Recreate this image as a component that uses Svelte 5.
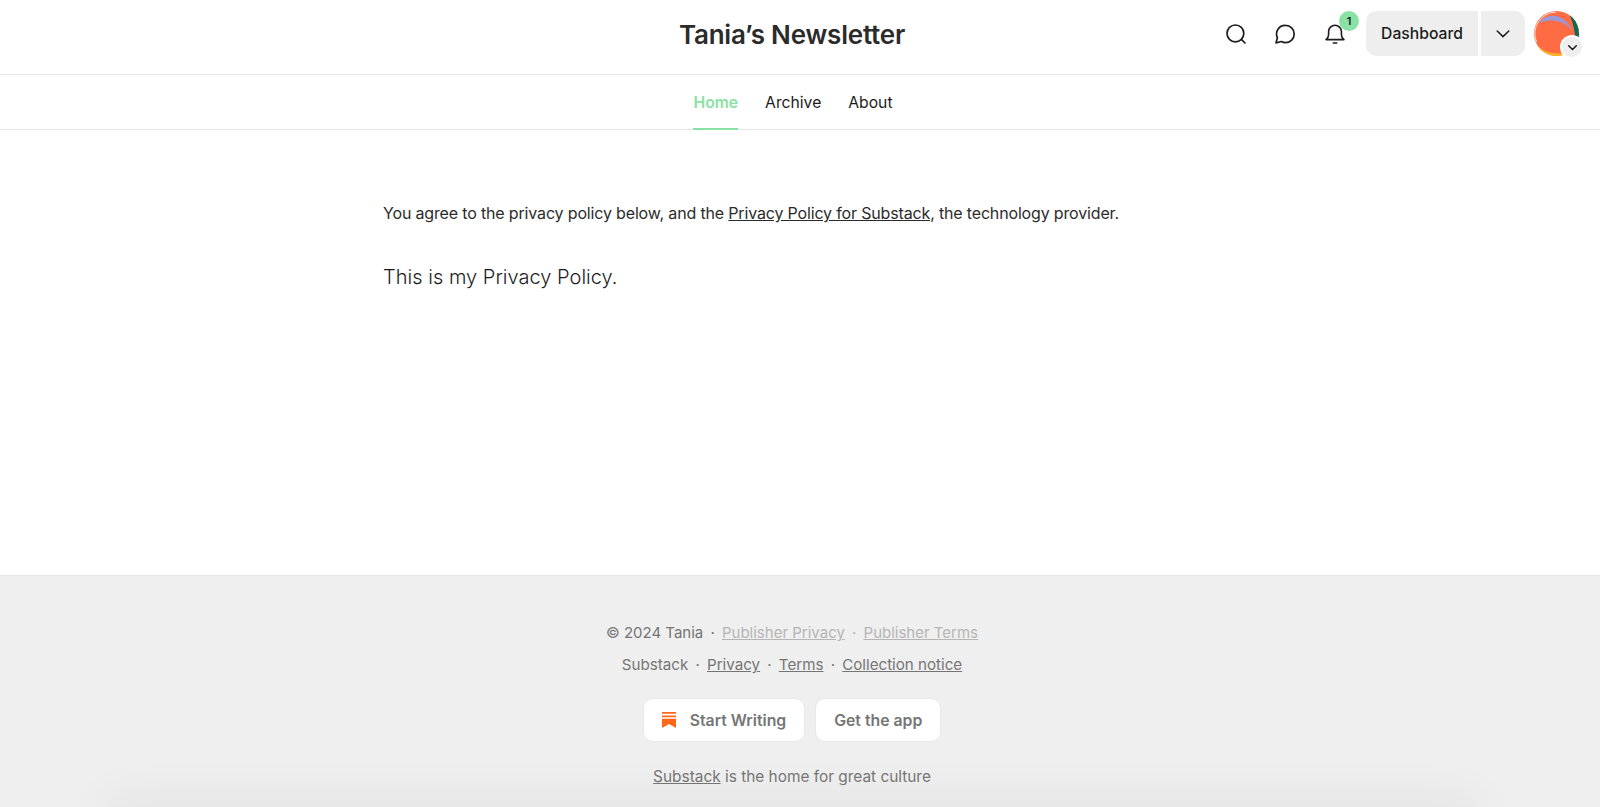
<script lang="ts">
	const tabs = [
		{ label: 'Home', active: true },
		{ label: 'Archive', active: false },
		{ label: 'About', active: false }
	];
</script>

<div class="page">
	<header class="topbar">
		<div class="title">Tania’s Newsletter</div>
		<div class="actions">
			<button class="icon-btn search" aria-label="Search">
				<svg width="24" height="24" viewBox="0 0 24 24" fill="none" stroke="#1c1c1c" stroke-width="1.7" stroke-linecap="round">
					<circle cx="11.4" cy="11.4" r="8.4" />
					<path d="M17.6 17.6l3.4 3.4" />
				</svg>
			</button>
			<button class="icon-btn chat" aria-label="Chat">
				<svg width="24" height="24" viewBox="0 0 24 24" fill="none" stroke="#1c1c1c" stroke-width="1.7" stroke-linejoin="round">
					<path d="M12.6 3.4a8.6 8.6 0 0 1 0 17.2c-1.5 0-3-.4-4.2-1.1L3 20.9l1.4-5.2a8.6 8.6 0 0 1 8.2-12.3z" />
				</svg>
			</button>
			<div class="bell-wrap">
				<svg width="24" height="24" viewBox="0 0 24 24" fill="none" stroke="#1c1c1c" stroke-width="1.6" stroke-linecap="round" stroke-linejoin="round">
					<path d="M3 17.6c1.6-1.2 2.6-2.6 2.6-5.2V9.6a6.4 6.4 0 0 1 12.8 0v2.8c0 2.6 1 4 2.6 5.2z" />
					<path d="M10.3 21h3.4" />
				</svg>
				<span class="badge">1</span>
			</div>
			<div class="split">
				<button class="dash">Dashboard</button>
				<button class="caret" aria-label="More">
					<svg width="16" height="16" viewBox="0 0 16 16" fill="none" stroke="#1c1c1c" stroke-width="1.5" stroke-linecap="round" stroke-linejoin="round">
						<path d="M2.2 5l5.8 5.6L13.8 5" />
					</svg>
				</button>
			</div>
			<div class="avatar">
				<svg width="45" height="45" viewBox="0 0 45 45">
					<defs>
						<clipPath id="disc"><circle cx="22.5" cy="22.5" r="22.5" /></clipPath>
					</defs>
					<g clip-path="url(#disc)">
						<rect width="45" height="45" fill="#ff6b42" />
						<path d="M36 5l9 0v31h-4c1-11-1-22-5-31z" fill="#0f6a52" />
						<path d="M5 12C11 2 29 0 39 20 30 9 16 7 5 12z" fill="#9b98d6" />
						<path d="M3 34c6 7 15 9 27 8l-3 5H8z" fill="#fbb327" />
					</g>
					<path d="M2.6 31A21.4 21.4 0 0 1 22 1.2" fill="none" stroke="#ffd9cc" stroke-width="1" />
				</svg>
				<span class="avatar-caret">
					<svg width="11" height="11" viewBox="0 0 16 16" fill="none" stroke="#1c1c1c" stroke-width="2.2" stroke-linecap="round" stroke-linejoin="round">
						<path d="M2.5 5.5L8 11l5.5-5.5" />
					</svg>
				</span>
			</div>
		</div>
	</header>

	<nav class="tabs">
		{#each tabs as tab}
			<a class="tab" class:active={tab.active} href="#top">{tab.label}</a>
		{/each}
	</nav>

	<main class="content">
		<div class="column">
			<p class="agree">
				You agree to the privacy policy below, and the <a href="#top">Privacy Policy for Substack</a>, the technology provider.
			</p>
			<p class="policy">This is my Privacy Policy.</p>
		</div>
	</main>

	<footer class="footer">
		<div class="line">
			<span>© 2024 Tania</span><i>·</i><a class="faint" href="#top">Publisher Privacy</a><i class="faint">·</i><a class="faint" href="#top">Publisher Terms</a>
		</div>
		<div class="line second">
			<span>Substack</span><i>·</i><a href="#top">Privacy</a><i>·</i><a href="#top">Terms</a><i>·</i><a href="#top">Collection notice</a>
		</div>
		<div class="buttons">
			<button class="pill">
				<svg width="14" height="16" viewBox="0 0 14 16" fill="#ff6719">
					<path d="M0 0h14v1.8H0zM0 3.4h14v1.8H0zM0 6.8h14V16l-7-3.9L0 16z" />
				</svg>
				<span class="start">Start Writing</span>
			</button>
			<button class="pill">Get the app</button>
		</div>
		<div class="tagline"><a href="#top">Substack</a> is the home for great culture</div>
		<div class="shade"></div>
	</footer>
</div>

<style>
	:global(body) {
		margin: 0;
		background: #fff;
	}

	.page {
		display: flex;
		flex-direction: column;
		height: 807px;
		overflow: hidden;
		font-family: Inter, 'Liberation Sans', sans-serif;
		color: #1c1c1c;
	}

	button {
		font-family: inherit;
		border: none;
		padding: 0;
		background: none;
	}

	.topbar {
		position: relative;
		flex: none;
		height: 74px;
		border-bottom: 1px solid #e6e6e6;
		display: flex;
		align-items: center;
		justify-content: center;
		padding-right: 16px;
	}

	.title {
		font-size: 26px;
		font-weight: 600;
		letter-spacing: -0.2px;
		color: #2b2b2b;
		margin-bottom: 6px;
	}

	.actions {
		position: absolute;
		top: 11px;
		right: 20px;
		display: flex;
		align-items: center;
	}

	.icon-btn {
		display: flex;
		width: 24px;
		height: 24px;
	}

	.search {
		margin-right: 25px;
	}

	.chat {
		margin-right: 25px;
	}

	.bell-wrap {
		position: relative;
		width: 24px;
		height: 24px;
		margin-left: 1px;
		margin-right: 19px;
	}

	.badge {
		position: absolute;
		top: -11px;
		left: 16px;
		width: 20px;
		height: 20px;
		border-radius: 50%;
		background: #8ae1a5;
		font-size: 11px;
		font-weight: 600;
		line-height: 20px;
		text-align: center;
	}

	.split {
		display: flex;
		gap: 3px;
		height: 45px;
		margin-right: 9px;
	}

	.dash {
		width: 112px;
		background: #eeeeee;
		border-radius: 10px 0 0 10px;
		font-size: 15.7px;
		font-weight: 500;
		color: #1c1c1c;
	}

	.caret {
		width: 44px;
		background: #eeeeee;
		border-radius: 0 10px 10px 0;
		display: flex;
		align-items: center;
		justify-content: center;
	}

	.avatar {
		position: relative;
		width: 45px;
		height: 45px;
		margin-right: 1px;
	}

	.avatar svg {
		display: block;
	}

	.avatar-caret {
		position: absolute;
		left: 26px;
		top: 24px;
		width: 20px;
		height: 20px;
		border-radius: 50%;
		background: #eeeeee;
		border: 2px solid #fff;
		display: flex;
		align-items: center;
		justify-content: center;
	}

	.tabs {
		flex: none;
		height: 54px;
		border-bottom: 1px solid #e6e6e6;
		display: flex;
		justify-content: center;
		gap: 27px;
		padding-right: 14px;
	}

	.tab {
		display: flex;
		align-items: center;
		box-sizing: border-box;
		padding-top: 2px;
		font-size: 15.7px;
		color: #1c1c1c;
		text-decoration: none;
		border-bottom: 2px solid transparent;
		margin-bottom: -1px;
	}

	.tab.active {
		color: #8ae1a5;
		font-weight: 600;
		border-bottom-color: #8ae1a5;
	}

	.content {
		flex: 1;
		padding: 71px 16px 0 0;
	}

	.column {
		width: 818px;
		margin: 0 auto;
	}

	.agree {
		margin: 0;
		font-size: 16px;
		line-height: 24px;
		letter-spacing: -0.16px;
		color: #2b2b2b;
	}

	.agree a {
		color: inherit;
	}

	.policy {
		margin: 36px 0 0;
		font-size: 20px;
		line-height: 32px;
		font-weight: 300;
		letter-spacing: 0.02px;
		color: #1c1c1c;
	}

	.footer {
		position: relative;
		flex: none;
		height: 232px;
		box-sizing: border-box;
		background: #efefef;
		border-top: 1px solid #e4e4e4;
		padding: 45px 16px 0 0;
		display: flex;
		flex-direction: column;
		align-items: center;
		font-size: 15px;
		color: #757575;
	}

	.footer a {
		color: inherit;
	}

	.line {
		display: flex;
		height: 24px;
		line-height: 24px;
		align-items: center;
	}

	.line i {
		font-style: normal;
		margin: 0 7.2px;
	}

	.second {
		margin-top: 8px;
		font-size: 15.15px;
	}

	.faint {
		color: #b5b5b5 !important;
	}

	.buttons {
		display: flex;
		gap: 10px;
		margin-top: 21px;
	}

	.pill {
		display: flex;
		align-items: center;
		height: 44px;
		padding: 0 18px;
		background: #fff;
		border: 1px solid #e8e8e8;
		border-radius: 10px;
		font-size: 15.8px;
		font-weight: 600;
		color: #757575;
	}

	.start {
		margin-left: 14px;
	}

	.tagline {
		margin-top: 23px;
		line-height: 24px;
		font-size: 15.4px;
		z-index: 1;
	}

	.shade {
		position: absolute;
		left: 115px;
		right: 131px;
		bottom: -30px;
		height: 30px;
		box-shadow: 0 0 50px 10px rgba(0, 0, 0, 0.05);
	}
</style>
